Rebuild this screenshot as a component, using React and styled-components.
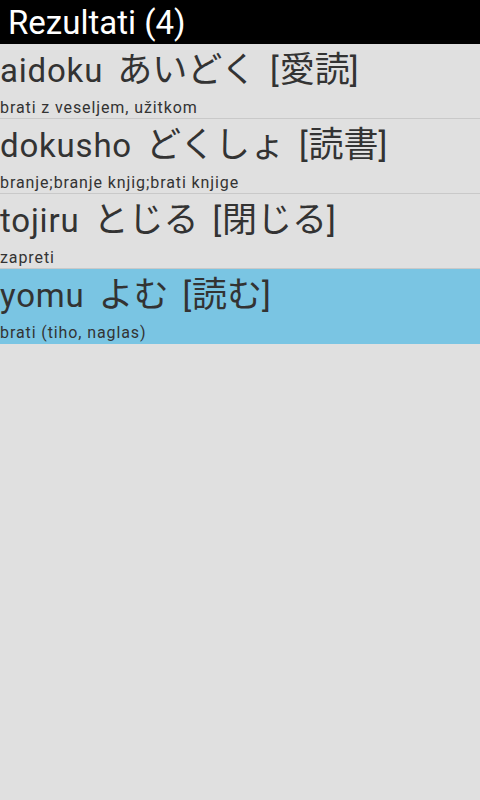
import styled, {createGlobalStyle} from "styled-components"

const Global = createGlobalStyle`
  html, body {
    margin: 0;
    padding: 0;
    background: #e0e0e0;
  }
  body {
    font-family: Roboto, "Noto Sans CJK JP", sans-serif;
  }
`

const Screen = styled.div`
  width: 480px;
  min-height: 800px;
  background: #e0e0e0;
  display: flex;
  flex-direction: column;
`

const TitleBar = styled.div`
  height: 44px;
  box-sizing: border-box;
  padding: 2px 0 0 8px;
  background: #000;
  color: #fff;
  font-size: 33px;
  line-height: 42px;
  white-space: nowrap;
`

const List = styled.div`
  display: flex;
  flex-direction: column;
`

const Row = styled.div`
  height: 75px;
  box-sizing: border-box;
  border-bottom: 1px solid ${p => (p.$selected ? "#7ac5e3" : "#c9c9c9")};
  background: ${p => (p.$selected ? "#7ac5e3" : "transparent")};
  color: #333;
  white-space: nowrap;
`

const Word = styled.div`
  height: 54px;
  font-size: 33px;
  line-height: 54px;
  word-spacing: 5px;
  letter-spacing: 0.8px;
`

const Jp = styled.span`
  font-family: "Noto Sans CJK JP", sans-serif;
  font-size: 35px;
  line-height: 1;
  letter-spacing: 0;
`

const Meaning = styled.div`
  font-size: 16px;
  line-height: 20px;
  letter-spacing: 0.9px;
`

const results = [
  {romaji: "aidoku", kana: "あいどく", kanji: "愛読", meaning: "brati z veseljem, užitkom"},
  {romaji: "dokusho", kana: "どくしょ", kanji: "読書", meaning: "branje;branje knjig;brati knjige"},
  {romaji: "tojiru", kana: "とじる", kanji: "閉じる", meaning: "zapreti"},
  {romaji: "yomu", kana: "よむ", kanji: "読む", meaning: "brati (tiho, naglas)", selected: true},
]

export default function App() {
  return (
    <Screen>
      <Global />
      <TitleBar>Rezultati ({results.length})</TitleBar>
      <List>
        {results.map(r => (
          <Row key={r.romaji} $selected={r.selected}>
            <Word>
              {r.romaji} <Jp>{r.kana}</Jp> [<Jp>{r.kanji}</Jp>]
            </Word>
            <Meaning>{r.meaning}</Meaning>
          </Row>
        ))}
      </List>
    </Screen>
  )
}
